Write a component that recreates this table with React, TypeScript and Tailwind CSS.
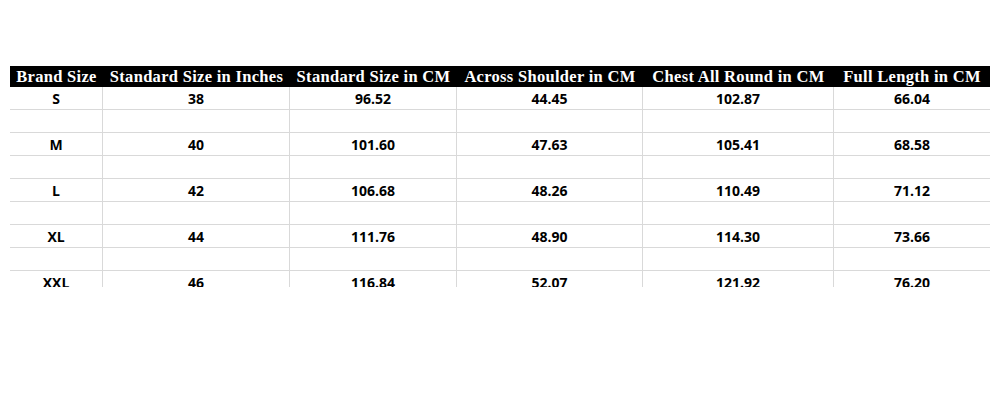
const headers = [
  'Brand Size',
  'Standard Size in Inches',
  'Standard Size in CM',
  'Across Shoulder in CM',
  'Chest All Round in CM',
  'Full Length in CM',
];

const sizes = [
  ['S', '38', '96.52', '44.45', '102.87', '66.04'],
  ['M', '40', '101.60', '47.63', '105.41', '68.58'],
  ['L', '42', '106.68', '48.26', '110.49', '71.12'],
  ['XL', '44', '111.76', '48.90', '114.30', '73.66'],
  ['XXL', '46', '116.84', '52.07', '121.92', '76.20'],
];

// a blank spacer row follows every size row
const rows: string[][] = sizes.flatMap((r) => [r, ['', '', '', '', '', '']]);

export default function App() {
  return (
    <div className="w-[1000px] h-[400px] bg-white pt-[66px] px-[10px]">
      <div className="h-[221px] overflow-hidden">
        <div className="grid grid-cols-[93px_187px_167px_186px_191px_156px]">
          {headers.map((h) => (
            <div
              key={h}
              className="h-[21px] bg-black text-white text-center font-bold text-[16.5px] tracking-[0.3px] leading-[21px] whitespace-nowrap font-['Liberation_Serif','Times_New_Roman',serif]"
            >
              {h}
            </div>
          ))}
          {rows.map((row, i) =>
            row.map((cell, j) => (
              <div
                key={`${i}-${j}`}
                className={`h-[23px] border-b border-[#d9d9d9] text-center font-bold text-[14px] leading-[23px] text-black font-['Open_Sans','Liberation_Sans',sans-serif] ${
                  j < 5 ? 'border-r' : ''
                }`}
              >
                {cell}
              </div>
            ))
          )}
        </div>
      </div>
    </div>
  );
}
